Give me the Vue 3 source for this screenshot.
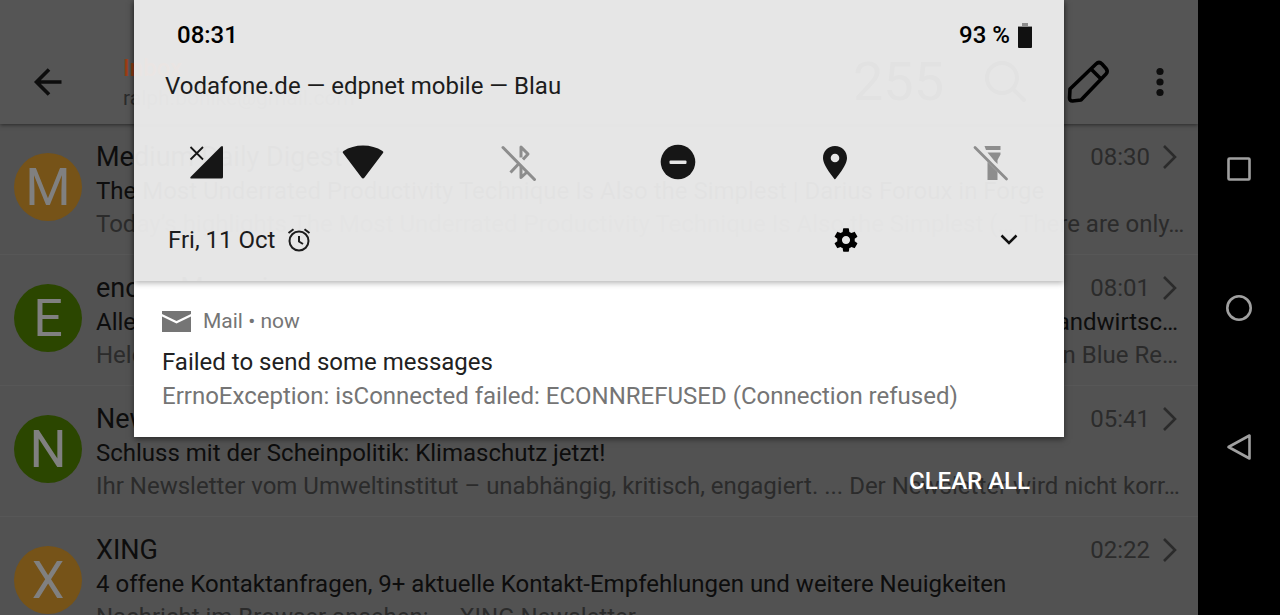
<script setup>
const mails = [
  {
    letter: 'M', tone: 'amber', time: '08:30',
    sender: 'Medium Daily Digest',
    subject: ['The Most Underrated Productivity Technique Is Also the Simplest | Darius Foroux in Forge'],
    preview: ['Today’s highlights The Most Underrated Productivity Technique Is Also the Simplest (… There are only…'],
  },
  {
    letter: 'E', tone: 'green', time: '08:01',
    sender: 'enorm Magazin',
    subject: ['Alles', 'Landwirtsc…'],
    preview: ['Helden', 'in Blue Re…'],
  },
  {
    letter: 'N', tone: 'green', time: '05:41',
    sender: 'Newsletter',
    subject: ['Schluss mit der Scheinpolitik: Klimaschutz jetzt!'],
    preview: ['Ihr Newsletter vom Umweltinstitut – unabhängig, kritisch, engagiert. ... Der Newsletter wird nicht korr…'],
  },
  {
    letter: 'X', tone: 'amber', time: '02:22',
    sender: 'XING',
    subject: ['4 offene Kontaktanfragen, 9+ aktuelle Kontakt-Empfehlungen und weitere Neuigkeiten'],
    preview: ['Nachricht im Browser ansehen: ... XING Newsletter'],
  },
]
</script>

<template>
  <div class="device">
    <div class="screen">
      <header class="bar">
        <button class="plain back" aria-label="Back">
          <svg width="30" height="30" viewBox="0 0 30 30" fill="none" stroke="#0d0d0d" stroke-width="3.6">
            <path d="M28.500 15H3.500M16 2.500L3.500 15L16 27.500" />
          </svg>
        </button>
        <div class="account">
          <h1>Inbox</h1>
          <p>ralph.bohlke@gmail.com</p>
        </div>
        <span class="count">255</span>
        <button class="plain search" aria-label="Search">
          <svg width="44" height="44" viewBox="0 0 44 44" fill="none" stroke="#000" stroke-width="4" stroke-linecap="round">
            <circle cx="18" cy="18" r="15" /><path d="M29 29L40 40" />
          </svg>
        </button>
        <button class="plain compose" aria-label="Compose">
          <svg width="44" height="44" viewBox="0 0 44 44" fill="none" stroke="#000" stroke-width="3.600" stroke-linejoin="round">
            <path d="M4 29L30 4Q33 1 36 4L40 8.500Q42.500 11.500 40 14L15 40L6.500 41Q3.500 41 3.500 38ZM25 9L35 19" />
          </svg>
        </button>
        <button class="plain more" aria-label="More options">
          <svg width="8" height="30" viewBox="0 0 8 30" fill="#0d0d0d">
            <circle cx="4" cy="4.500" r="3.600" /><circle cx="4" cy="15" r="3.600" /><circle cx="4" cy="25.500" r="3.600" />
          </svg>
        </button>
      </header>

      <ul class="list">
        <li v-for="m in mails" :key="m.sender" class="row">
          <span class="avatar" :class="m.tone">{{ m.letter }}</span>
          <div class="text">
            <div class="line sender">
              <span>{{ m.sender }}</span>
              <span class="when">
                <time>{{ m.time }}</time>
                <svg width="16" height="26" viewBox="0 0 16 26" fill="none" stroke="#2b2b2b" stroke-width="2.600"><path d="M2 1L13 12L2 23" /></svg>
              </span>
            </div>
            <div class="line subject"><span v-for="s in m.subject" :key="s">{{ s }}</span></div>
            <div class="line preview"><span v-for="s in m.preview" :key="s">{{ s }}</span></div>
          </div>
        </li>
      </ul>

      <div class="shade">
        <section class="panel">
          <div class="quick">
            <div class="status">
              <span>08:31</span>
              <span class="battery">93 %
                <svg width="14" height="25" viewBox="0 0 14 25"><path d="M4 0h6v3h4v1H0V3h4z" fill="#8d8d8d" /><path d="M0 4h14v20q0 1-1 1H1q-1 0-1-1z" fill="#111" /></svg>
              </span>
            </div>
            <p class="carrier">Vodafone.de — edpnet mobile — Blau</p>
            <div class="tiles">
              <button class="plain" aria-label="Mobile data">
                <svg width="36" height="36" viewBox="0 0 36 36" fill="#161616"><path d="M33 2.500Q35 1 35 3.500V33q0 1.500-1.500 1.500H4Q1 34.500 3 32.500Z" /><path d="M2.500 3L15 15.500M15 3L2.500 15.500" stroke="#161616" stroke-width="1.800" /></svg>
              </button>
              <button class="plain" aria-label="Wi-Fi">
                <svg width="42" height="36" viewBox="0 0 42 36" fill="#161616"><path d="M1 9Q0 8 1.500 7Q10 1.500 21 1.500T40.500 7Q42 8 41 9L22.500 33.500Q21 35.500 19.500 33.500Z" /></svg>
              </button>
              <button class="plain" aria-label="Bluetooth off">
                <svg width="36" height="38" viewBox="1.500 0 36 38" fill="none" stroke="#8d8d8d" stroke-width="3" stroke-linejoin="round"><path d="M2.500 4.500L34 36.500" stroke-linecap="round" /><path d="M20.500 14.500V4L27.500 11L22.500 16.500M18 21L10 29.500M20.500 23V34.500L26 29.500" /></svg>
              </button>
              <button class="plain" aria-label="Do not disturb">
                <svg width="36" height="36" viewBox="0 0 36 36"><circle cx="18" cy="18" r="17.300" fill="#161616" /><rect x="9.500" y="16.500" width="17" height="3.500" rx="1" fill="#e6e6e6" /></svg>
              </button>
              <button class="plain" aria-label="Location">
                <svg width="26" height="36" viewBox="0 0 26 36" fill="#161616" fill-rule="evenodd"><path d="M13 2C6 2 1 7 1 14C1 22 13 35.500 13 35.500S25 22 25 14C25 7 20 2 13 2ZM13 9.700a4.300 4.300 0 1 1 0 8.600a4.300 4.300 0 1 1 0-8.600Z" /></svg>
              </button>
              <button class="plain" aria-label="Flashlight off">
                <svg width="36" height="38" viewBox="1.500 0 36 38" fill="#8d8d8d"><path d="M12 3h16v4H13.500zM15 9.500H28v2L25 17V21L22 18zM15 19L25 29V37H15z" /><path d="M2.500 4.500L34 36" stroke="#8d8d8d" stroke-width="2.800" stroke-linecap="round" /></svg>
              </button>
            </div>
            <div class="foot">
              <span class="date">Fri, 11 Oct
                <svg width="24" height="24" viewBox="0 0 24 24" fill="none" stroke="#1c1c1c" stroke-width="2"><circle cx="12" cy="13" r="9.500" /><path d="M12 8V13.500L16 16M1.500 5L6.500 1.200M17.500 1.200L22.500 5" /></svg>
              </span>
              <button class="plain gear" aria-label="Settings">
                <svg width="28" height="28" viewBox="0 0 24 24" fill="#000"><path d="M19.430 12.980c.04-.32.07-.64.07-.98s-.03-.66-.07-.98l2.110-1.650c.19-.15.240-.42.120-.64l-2-3.460c-.12-.22-.39-.3-.61-.22l-2.490 1c-.52-.4-1.080-.73-1.690-.98l-.38-2.650C14.460 2.180 14.250 2 14 2h-4c-.25 0-.46.18-.49.420l-.38 2.650c-.61.250-1.170.590-1.690.980l-2.490-1c-.23-.09-.49 0-.61.220l-2 3.460c-.13.220-.07.490.12.640l2.110 1.650c-.04.320-.07.650-.07.980s.03.660.07.980l-2.110 1.650c-.19.150-.24.420-.12.640l2 3.460c.12.220.390.300.610.220l2.490-1c.52.400 1.080.730 1.690.980l.38 2.650c.03.240.240.420.490.420h4c.25 0 .46-.18.490-.42l.38-2.650c.61-.25 1.170-.59 1.690-.98l2.490 1c.23.090.490 0 .61-.22l2-3.460c.12-.22.070-.49-.12-.64l-2.110-1.650zM12 15.500c-1.930 0-3.500-1.570-3.500-3.500s1.570-3.500 3.500-3.500 3.500 1.570 3.500 3.500-1.570 3.500-3.500 3.500z" /></svg>
              </button>
              <button class="plain expand" aria-label="Expand">
                <svg width="18" height="12" viewBox="0 0 18 12" fill="none" stroke="#111" stroke-width="2.500"><path d="M1.500 1.500L9 9L16.500 1.500" /></svg>
              </button>
            </div>
          </div>
          <article class="note">
            <p class="app">
              <svg width="29" height="21" viewBox="0 0 29 21" fill="#757575"><path d="M0 0H29V3L14.500 10L0 3ZM0 5.500L14.500 12.500L29 5.500V21H0Z" /></svg>
              <span>Mail • now</span>
            </p>
            <h2>Failed to send some messages</h2>
            <p class="error">ErrnoException: isConnected failed: ECONNREFUSED (Connection refused)</p>
          </article>
        </section>
        <button class="plain clear">CLEAR ALL</button>
      </div>
    </div>

    <nav class="nav">
      <button class="plain" aria-label="Overview"><svg width="28" height="28" viewBox="0 0 28 28"><rect x="3.500" y="3.500" width="21" height="21" rx="1" /></svg></button>
      <button class="plain" aria-label="Home"><svg width="28" height="28" viewBox="0 0 28 28"><circle cx="14" cy="14" r="11.700" /></svg></button>
      <button class="plain" aria-label="Back"><svg width="28" height="28" viewBox="0 0 28 28"><path d="M24.500 2.500V25.500L3.500 14Z" stroke-linejoin="round" /></svg></button>
    </nav>
  </div>
</template>

<style>
body { background: #525252; }
</style>

<style scoped>
.device { display: flex; height: 100vh; overflow: hidden; font-family: Roboto, "Liberation Sans", sans-serif; }
.screen { position: relative; flex: 1; min-width: 0; display: flex; flex-direction: column; background: #525252; overflow: hidden; }
h1, h2, p, ul { margin: 0; padding: 0; font-weight: 400; }
svg { display: block; flex: none; overflow: visible; }
.plain { border: 0; padding: 0; background: none; font: inherit; color: inherit; display: flex; align-items: center; justify-content: center; }

.bar { position: relative; flex: none; box-sizing: border-box; height: 124px; padding: 40px 34px 0 33px; display: flex; align-items: center; background: #555; box-shadow: 0 1px 4px rgba(0, 0, 0, .5); }
.account { flex: 1; margin-left: 60px; }
.account h1 { font-size: 24px; line-height: 32px; font-weight: 500; color: #9a3e14; }
.account p { font-size: 21px; line-height: 28px; color: #2b2b2b; }
.count { font-size: 54px; line-height: 60px; color: #000; }
.search { margin-left: 40px; }
.compose { margin-left: 38px; }
.more { margin-left: 46px; }

.list { list-style: none; }
.row { box-sizing: border-box; height: 131px; display: flex; padding: 16px 20px 0 14px; border-bottom: 1px solid #575757; }
.avatar { flex: none; width: 68px; height: 68px; margin: 13px 14px 0 0; border-radius: 50%; display: flex; align-items: center; justify-content: center; font-size: 52px; color: #808080; }
.amber { background: #765318; }
.green { background: #2b4600; }
.text { flex: 1; min-width: 0; }
.line { display: flex; justify-content: space-between; white-space: pre; }
.sender { font-size: 27px; line-height: 35px; color: #0d0d0d; }
.when { display: flex; align-items: center; gap: 12px; font-size: 24px; color: #2b2b2b; }
.subject { font-size: 24px; line-height: 33px; color: #0d0d0d; }
.preview { font-size: 24px; line-height: 33px; color: #2b2b2b; }

.shade { position: absolute; top: 0; left: 134px; right: 134px; }
.panel { box-shadow: 0 2px 6px rgba(0, 0, 0, .5); }
.quick { position: relative; box-sizing: border-box; height: 281px; background: rgba(238, 238, 238, .95); box-shadow: 0 2px 6px rgba(0, 0, 0, .3); color: #1c1c1c; }
.status { display: flex; justify-content: space-between; padding: 20px 32px 0 43px; font-size: 24px; line-height: 30px; font-weight: 500; color: #000; }
.battery { display: flex; align-items: center; gap: 8px; }
.carrier { padding: 20px 31px 0; font-size: 24px; line-height: 32px; }
.tiles { display: grid; grid-template-columns: repeat(6, 36px); justify-content: space-between; justify-items: center; align-items: center; height: 40px; padding: 0 54px; margin-top: 40px; }
.foot { display: flex; align-items: center; height: 36px; margin-top: 40px; padding: 0 46px 0 34px; }
.date { flex: 1; display: flex; align-items: center; gap: 12px; font-size: 24px; }
.expand { margin-left: 140px; }
.note { background: #fff; padding: 26px 28px 24px; }
.app { display: flex; align-items: center; gap: 12px; font-size: 21px; line-height: 28px; color: #757575; }
.note h2 { margin-top: 10px; font-size: 24px; line-height: 34px; color: #212121; }
.error { font-size: 24px; line-height: 34px; color: #757575; }
.clear { margin: 28px 34px 0 auto; font-size: 24px; line-height: 32px; font-weight: 500; color: #fff; }

.nav { flex: none; width: 82px; display: flex; flex-direction: column; align-items: center; justify-content: center; gap: 111px; background: #000; }
.nav svg { fill: none; stroke: #a0a0a0; stroke-width: 2.600; }
</style>
